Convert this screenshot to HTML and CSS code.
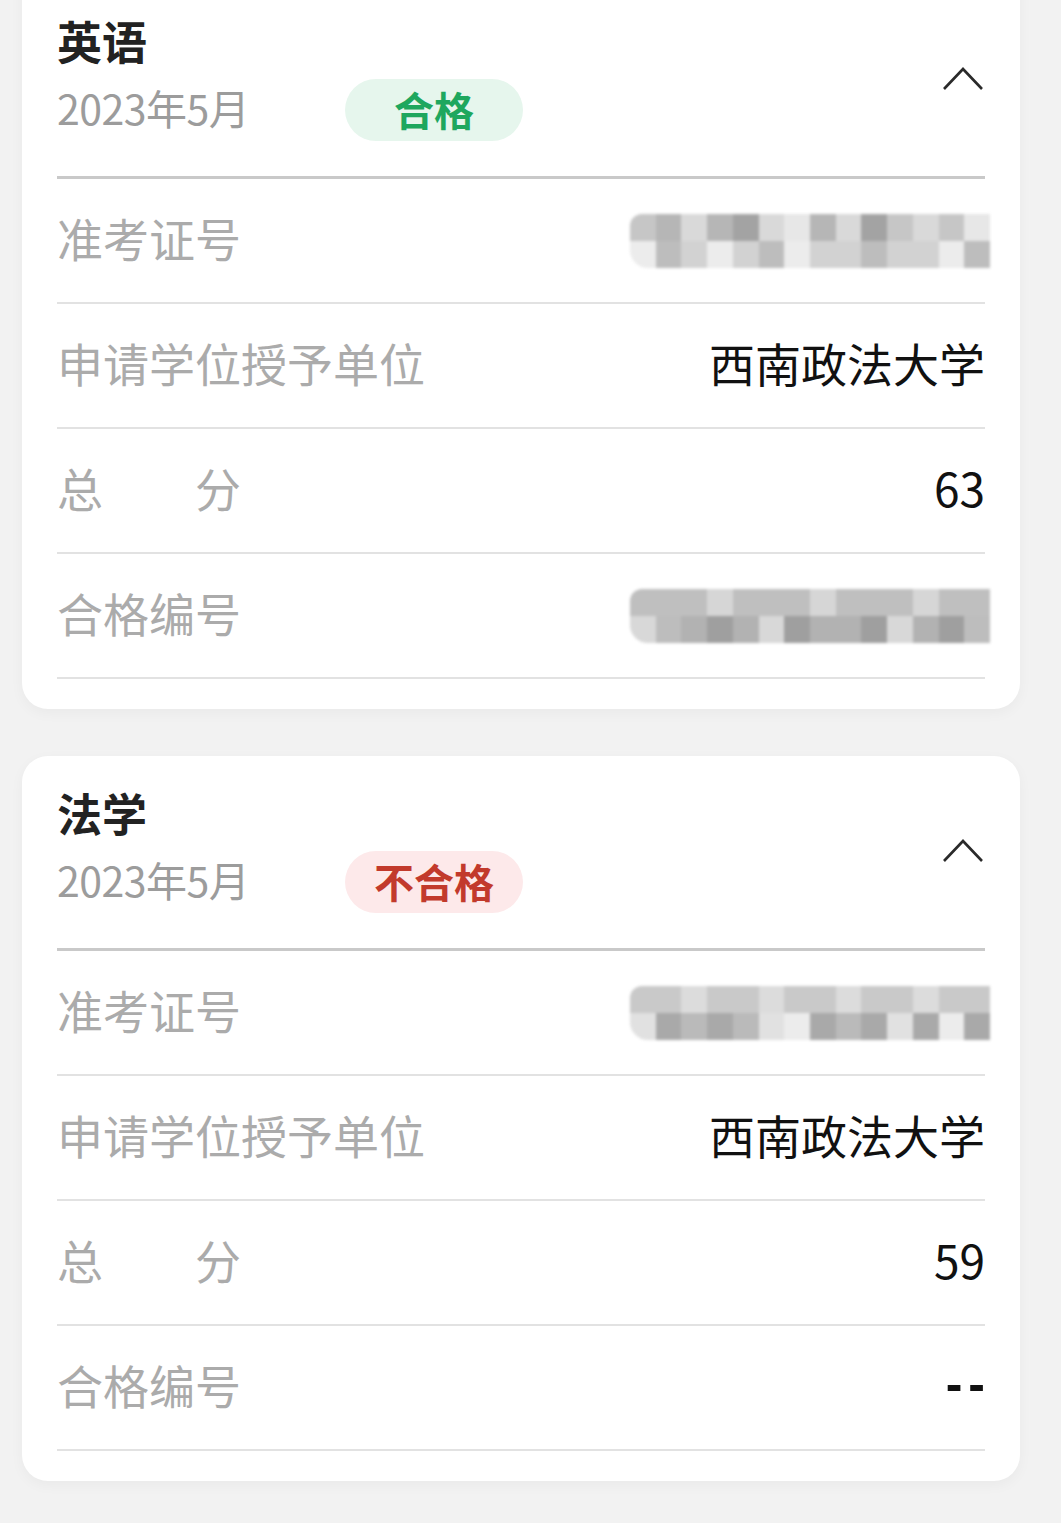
FILE: index.html
```html
<!DOCTYPE html>
<html lang="zh-CN">
<head>
<meta charset="utf-8">
<title>成绩</title>
<link rel="stylesheet" href="styles.css">
</head>
<body>
<div class="page">
  <section class="card card-first">
    <header class="card-head">
      <div class="head-main">
        <h2 class="subject">英语</h2>
        <div class="meta">
          <span class="date">2023年5月</span>
          <span class="badge badge-pass">合格</span>
        </div>
      </div>
      <svg class="chevron" viewBox="0 0 42 26" width="42" height="26"><path d="M2 24 L21 4 L40 24" fill="none" stroke="#2a2a2a" stroke-width="2.6"/></svg>
    </header>
    <div class="row">
      <span class="label">准考证号</span>
      <span class="mosaic"><i></i><i></i><i></i><i></i><i></i><i></i><i></i><i></i><i></i><i></i><i></i><i></i><i></i><i></i><i></i><i></i><i></i><i></i><i></i><i></i><i></i><i></i><i></i><i></i><i></i><i></i><i></i><i></i></span>
    </div>
    <div class="row">
      <span class="label">申请学位授予单位</span>
      <span class="value">西南政法大学</span>
    </div>
    <div class="row">
      <span class="label">总　　分</span>
      <span class="value">63</span>
    </div>
    <div class="row">
      <span class="label">合格编号</span>
      <span class="mosaic mosaic-b"><i></i><i></i><i></i><i></i><i></i><i></i><i></i><i></i><i></i><i></i><i></i><i></i><i></i><i></i><i></i><i></i><i></i><i></i><i></i><i></i><i></i><i></i><i></i><i></i><i></i><i></i><i></i><i></i></span>
    </div>
  </section>

  <section class="card">
    <header class="card-head">
      <div class="head-main">
        <h2 class="subject">法学</h2>
        <div class="meta">
          <span class="date">2023年5月</span>
          <span class="badge badge-fail">不合格</span>
        </div>
      </div>
      <svg class="chevron" viewBox="0 0 42 26" width="42" height="26"><path d="M2 24 L21 4 L40 24" fill="none" stroke="#2a2a2a" stroke-width="2.6"/></svg>
    </header>
    <div class="row">
      <span class="label">准考证号</span>
      <span class="mosaic mosaic-c"><i></i><i></i><i></i><i></i><i></i><i></i><i></i><i></i><i></i><i></i><i></i><i></i><i></i><i></i><i></i><i></i><i></i><i></i><i></i><i></i><i></i><i></i><i></i><i></i><i></i><i></i><i></i><i></i></span>
    </div>
    <div class="row">
      <span class="label">申请学位授予单位</span>
      <span class="value">西南政法大学</span>
    </div>
    <div class="row">
      <span class="label">总　　分</span>
      <span class="value">59</span>
    </div>
    <div class="row">
      <span class="label">合格编号</span>
      <span class="value value-dash">--</span>
    </div>
  </section>
</div>
</body>
</html>
```

FILE: styles.css
```css
* { box-sizing: border-box; }
html, body {
  margin: 0;
  padding: 0;
  background: #f2f2f2;
}
body {
  font-family: "Noto Sans CJK SC", "Noto Sans", sans-serif;
  color: #111;
}
.page {
  padding: 0 41px 60px 22px;
  display: flex;
  flex-direction: column;
  gap: 47px;
}
.card {
  background: #fff;
  border-radius: 26px;
  padding: 0 35px 30px;
  box-shadow: 0 4px 14px rgba(0, 0, 0, 0.04);
}
.card-first {
  margin-top: -16px;
  border-top-left-radius: 0;
  border-top-right-radius: 0;
}
.card-head {
  display: flex;
  align-items: center;
  justify-content: space-between;
  padding: 31px 0 35px;
  border-bottom: 3px solid #c9c9c9;
}
.head-main {
  display: flex;
  flex-direction: column;
}
.subject {
  margin: 0;
  font-size: 45px;
  line-height: 52px;
  font-weight: 700;
  color: #222;
}
.meta {
  display: flex;
  align-items: center;
  margin-top: 12px;
  height: 62px;
}
.date {
  width: 288px;
  font-size: 41px;
  line-height: 54px;
  color: #9c9c9c;
  letter-spacing: -0.5px;
  padding-bottom: 6px;
}
.badge {
  width: 178px;
  height: 62px;
  border-radius: 31px;
  display: flex;
  align-items: center;
  justify-content: center;
  font-size: 40px;
  font-weight: 700;
  line-height: 1;
  padding-bottom: 3px;
}
.badge-pass {
  background: #e6f6ed;
  color: #1ea75e;
}
.badge-fail {
  background: #fde9ea;
  color: #c23a2c;
}
.chevron {
  display: block;
  margin-right: 1px;
}
.row {
  height: 125px;
  display: flex;
  align-items: center;
  justify-content: space-between;
  border-bottom: 2px solid #e2e2e2;
  padding-bottom: 7px;
}
.label {
  font-size: 46px;
  color: #ababab;
  line-height: 1;
  white-space: pre;
}
.value {
  font-size: 46px;
  color: #111;
  line-height: 1;
}
.value-dash {
  letter-spacing: 6px;
  margin-right: -6px;
  font-family: "Liberation Sans", sans-serif;
  font-weight: 700;
  font-size: 50px;
}
.mosaic {
  width: 360px;
  height: 54px;
  margin-right: -5px;
  margin-top: 7px;
  display: grid;
  grid-template-columns: repeat(14, 1fr);
  grid-template-rows: repeat(2, 1fr);
  border-radius: 12px 0 0 18px;
  overflow: hidden;
  filter: blur(1.5px);
}
.mosaic i {
  background: #c6c6c6;
}
.mosaic i:nth-child(2n) { background: #b6b6b6; }
.mosaic i:nth-child(3n) { background: #d9d9d9; }
.mosaic i:nth-child(5n) { background: #a3a3a3; }
.mosaic i:nth-child(7n) { background: #e7e7e7; }
.mosaic i:nth-child(n+15) { background: #d2d2d2; }
.mosaic i:nth-child(n+15):nth-child(3n) { background: #ececec; }
.mosaic i:nth-child(n+15):nth-child(4n) { background: #bdbdbd; }
.mosaic-b i:nth-child(-n+14) { background: #bfbfbf; }
.mosaic-b i:nth-child(-n+14):nth-child(4n) { background: #d6d6d6; }
.mosaic-b i:nth-child(n+15) { background: #b2b2b2; }
.mosaic-b i:nth-child(n+15):nth-child(3n) { background: #9f9f9f; }
.mosaic-b i:nth-child(n+15):nth-child(5n) { background: #d8d8d8; }
.mosaic-c i:nth-child(-n+14) { background: #c9c9c9; }
.mosaic-c i:nth-child(-n+14):nth-child(3n) { background: #dcdcdc; }
.mosaic-c i:nth-child(n+15) { background: #bababa; }
.mosaic-c i:nth-child(n+15):nth-child(2n) { background: #a9a9a9; }
.mosaic-c i:nth-child(n+15):nth-child(5n) { background: #e1e1e1; }
```
